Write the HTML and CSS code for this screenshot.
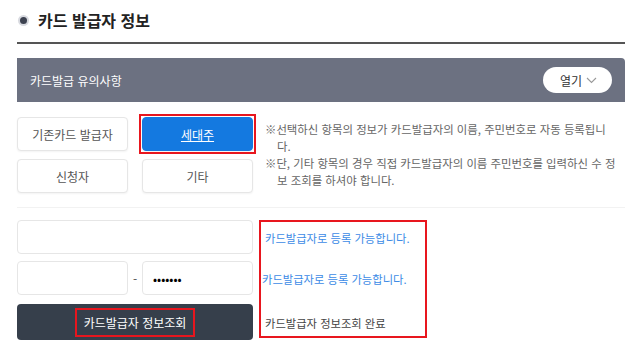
FILE: index.html
```html
<!DOCTYPE html>
<html lang="ko">
<head>
    <meta charset="UTF-8">
    <title>카드 발급자 정보</title>
    <link rel="stylesheet" href="styles.css">
</head>
<body>
    <div class="wrap">
        <h2 class="title"><span class="dot"></span>카드 발급자 정보</h2>

        <!-- 유의사항 -->
        <div class="notice-bar">
            <span>카드발급 유의사항</span>
            <button type="button" class="open-btn">열기 <svg width="11" height="7" viewBox="0 0 11 7"><path d="M1 1l4.5 4.5L10 1" fill="none" stroke="#999" stroke-width="1.1"/></svg></button>
        </div>

        <!-- 발급자 선택 -->
        <div class="choose">
            <div class="choose-grid">
                <button type="button" class="opt">기존카드 발급자</button>
                <button type="button" class="opt on"><u>세대주</u></button>
                <button type="button" class="opt">신청자</button>
                <button type="button" class="opt">기타</button>
            </div>
            <div class="notes">
                <p>※선택하신 항목의 정보가 카드발급자의 이름, 주민번호로 자동 등록됩니<br>다.</p>
                <p>※단, 기타 항목의 경우 직접 카드발급자의 이름 주민번호를 입력하신 수 정<br>보 조회를 하셔야 합니다.</p>
            </div>
        </div>

        <!-- 발급자 정보 입력 -->
        <div class="entry">
            <div class="fields">
                <input type="text" class="field">
                <div class="jumin">
                    <input type="text" class="field">
                    <span class="dash">-</span>
                    <input type="password" class="field" value="1234567">
                </div>
                <button type="button" class="search-btn"><span class="mark">카드발급자 정보조회</span></button>
            </div>
            <div class="result">
                <p class="ok">카드발급자로 등록 가능합니다.</p>
                <p class="ok second">카드발급자로 등록 가능합니다.</p>
                <p class="done">카드발급자 정보조회 완료</p>
            </div>
        </div>
    </div>
</body>
</html>
```

FILE: styles.css
```css
body {
    margin: 0;
    font-family: "Noto Sans CJK KR", "Noto Sans", sans-serif;
    background-color: #fff;
    color: #333;
}

.wrap {
    width: 608px;
    margin-left: 17px;
}

.title {
    display: flex;
    align-items: center;
    margin: 0;
    padding-left: 3px;
    padding-bottom: 2px;
    height: 44px;
    box-sizing: border-box;
    font-size: 16px;
    font-weight: bold;
    color: #222;
    border-bottom: 2px solid #555;
}

.dot {
    width: 7px;
    height: 7px;
    border-radius: 50%;
    background-color: #3d4250;
    box-shadow: 0 0 0 2px #d8dae0;
    margin-right: 11px;
}

.notice-bar {
    display: flex;
    justify-content: space-between;
    align-items: center;
    margin-top: 14px;
    height: 44px;
    padding: 0 13px;
    background-color: #6c7181;
    border-radius: 0 4px 0 0;
    color: #fff;
    font-size: 12px;
}

.open-btn {
    display: flex;
    align-items: center;
    gap: 4px;
    height: 26px;
    padding: 0 15px 0 17px;
    border: none;
    border-radius: 13px;
    background-color: #fff;
    color: #333;
    font-family: inherit;
    font-size: 12px;
}

.choose {
    display: flex;
    padding: 15px 0 14px;
    border-bottom: 1px solid #f2f2f2;
}

.choose-grid {
    display: grid;
    grid-template-columns: 111px 111px;
    column-gap: 14px;
    row-gap: 8px;
}

.opt {
    height: 34px;
    border: 1px solid #e6e6e6;
    border-radius: 4px;
    background-color: #fff;
    color: #555;
    font-family: inherit;
    font-size: 12px;
    box-shadow: 0 1px 2px rgba(0, 0, 0, 0.05);
}

.opt.on {
    position: relative;
    background-color: #1479e0;
    border-color: #1479e0;
    color: #fff;
}

/* 빨간 표시 박스 */
.opt.on::after {
    content: "";
    position: absolute;
    top: -4px;
    left: -4px;
    right: -4px;
    bottom: -4px;
    border: 2px solid #e8161e;
}

.notes {
    margin-left: 12px;
    font-size: 11.4px;
    line-height: 16.5px;
    color: #666;
    padding-top: 4px;
    white-space: nowrap;
}

.notes p {
    margin: 0 0 1px;
    padding-left: 12px;
    text-indent: -12px;
}

.entry {
    display: flex;
    padding-top: 12px;
}

.fields {
    width: 236px;
    display: flex;
    flex-direction: column;
    gap: 7px;
}

.field {
    height: 34px;
    border: 1px solid #e6e6e6;
    border-radius: 4px;
    box-sizing: border-box;
    padding: 0 10px;
    font-family: inherit;
    font-size: 12px;
}

.jumin {
    display: flex;
    align-items: center;
}

.jumin .field {
    width: 111px;
}

.dash {
    width: 14px;
    text-align: center;
    font-size: 12px;
    color: #555;
}

.search-btn {
    height: 36px;
    margin-top: 2px;
    border: none;
    border-radius: 4px;
    background-color: #363f4b;
    color: #fff;
    font-family: inherit;
    font-size: 12px;
}

.mark {
    display: inline-block;
    padding: 4px 7px;
    border: 2px solid #e8161e;
}

.result {
    margin-left: 6px;
    width: 164px;
    height: 114px;
    border: 2px solid #e8161e;
    font-size: 11.3px;
    position: relative;
}

.result p {
    margin: 0;
    position: absolute;
    left: 4px;
}

.ok {
    color: #3d8be6;
    top: 8px;
}

.ok.second {
    left: 1px;
    top: 49px;
}

.done {
    color: #444;
    top: 93px;
}
```
